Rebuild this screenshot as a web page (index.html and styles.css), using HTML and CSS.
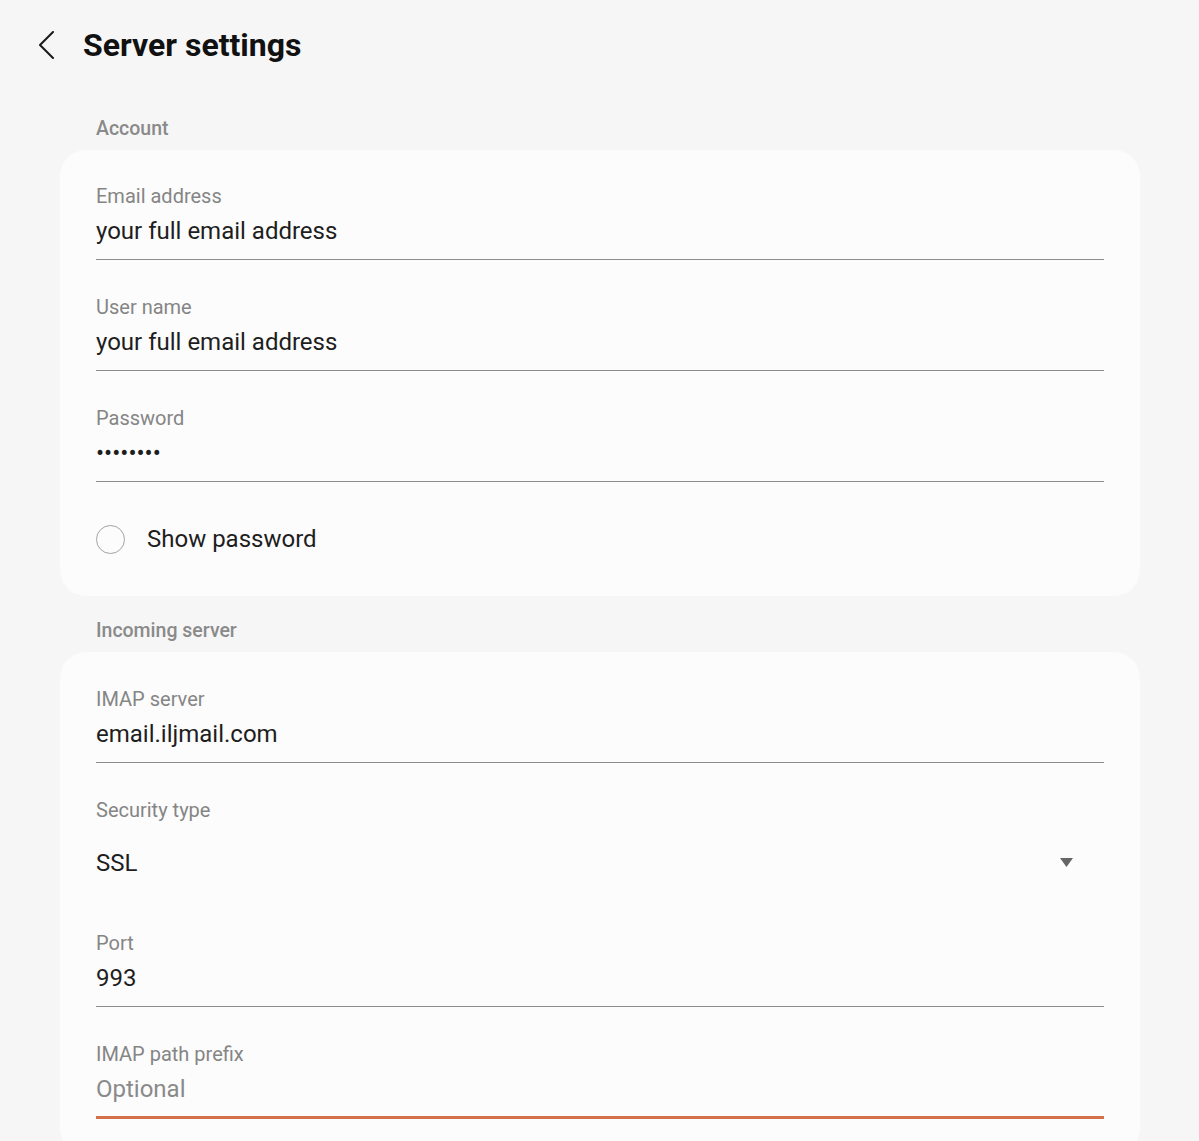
FILE: index.html
```html
<!DOCTYPE html>
<html>
<head>
    <title>Server settings</title>
    <link rel="stylesheet" href="styles.css">
</head>
<body>
<div class="header">
    <svg class="back" width="16" height="28" viewBox="0 0 16 28">
        <path d="M15 1 L2 14 L15 27" fill="none" stroke="#1a1a1a" stroke-width="2" stroke-linecap="round" stroke-linejoin="round"/>
    </svg>
    <h1>Server settings</h1>
</div>

<div class="section-label">Account</div>
<div class="card">
    <div class="field first">
        <div class="label">Email address</div>
        <div class="value">your full email address</div>
    </div>
    <div class="field">
        <div class="label">User name</div>
        <div class="value">your full email address</div>
    </div>
    <div class="field">
        <div class="label">Password</div>
        <div class="value">••••••••</div>
    </div>
    <div class="check-row">
        <span class="radio"></span>
        <span class="check-text">Show password</span>
    </div>
</div>

<div class="section-label spaced">Incoming server</div>
<div class="card last">
    <div class="field">
        <div class="label">IMAP server</div>
        <div class="value">email.iljmail.com</div>
    </div>
    <div class="field select-field">
        <div class="label">Security type</div>
        <div class="select">
            <span class="value">SSL</span>
            <svg class="arrow" width="13" height="9" viewBox="0 0 13 9">
                <path d="M0 0 L13 0 L6.5 9 Z" fill="#666"/>
            </svg>
        </div>
    </div>
    <div class="field">
        <div class="label">Port</div>
        <div class="value">993</div>
    </div>
    <div class="field focused">
        <div class="label">IMAP path prefix</div>
        <div class="value placeholder">Optional</div>
    </div>
</div>
</body>
</html>
```

FILE: styles.css
```css
body {
    font-family: Roboto, "Liberation Sans", sans-serif;
    background-color: #f6f6f6;
    margin: 0;
    padding: 0;
    color: #1e1e1e;
}
.header {
    display: flex;
    align-items: center;
    height: 40px;
    padding: 25px 0 52px 38px;
}
.back {
    display: block;
}
h1 {
    margin: 0 0 0 29px;
    font-size: 32px;
    line-height: 40px;
    font-weight: 700;
    color: #111;
}
.section-label {
    padding-left: 96px;
    font-size: 19.5px;
    line-height: 24px;
    font-weight: 500;
    color: #8a8a8a;
    margin-bottom: 9px;
}
.section-label.spaced {
    padding-top: 23px;
}
.card {
    background-color: #fcfcfc;
    border-radius: 26px;
    margin: 0 59px 0 60px;
    padding: 0 36px;
}
.card.last {
    padding-bottom: 35px;
}
.field {
    padding: 35px 0 13px;
    border-bottom: 1px solid #8c8c8c;
}
.field.first {
    padding-top: 34px;
}
.label {
    font-size: 20px;
    line-height: 24px;
    color: #858585;
}
.value {
    margin-top: 8px;
    font-size: 24px;
    line-height: 30px;
    color: #1e1e1e;
}
.placeholder {
    color: #8a8a8a;
}
.focused {
    padding-bottom: 12px;
    border-bottom: 3px solid #d2714a;
}
.select-field {
    border-bottom: none;
    padding-bottom: 9px;
}
.select {
    display: flex;
    align-items: center;
    justify-content: space-between;
    height: 48px;
    margin-top: 17px;
}
.select .value {
    margin-top: 0;
}
.arrow {
    display: block;
    margin: 0 31px 2px 0;
}
.check-row {
    display: flex;
    align-items: center;
    height: 114px;
}
.radio {
    width: 27px;
    height: 27px;
    border: 1.5px solid #a3a3a3;
    border-radius: 50%;
}
.check-text {
    margin-left: 22px;
    font-size: 24px;
    line-height: 30px;
    color: #1e1e1e;
}
```
